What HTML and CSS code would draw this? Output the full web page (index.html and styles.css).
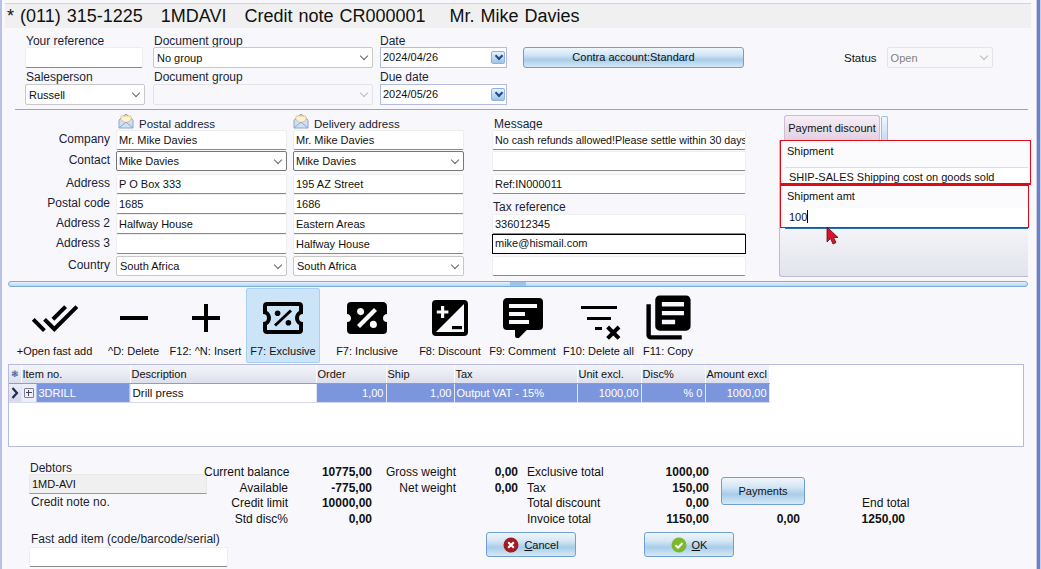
FILE: index.html
```html
<!DOCTYPE html>
<html lang="en">
<head>
    <meta charset="UTF-8">
    <meta name="viewport" content="width=device-width, initial-scale=1.0">
    <title>Credit note CR000001</title>
    <link rel="stylesheet" href="styles.css">
</head>
<body>
<div class="window">
    <h1 class="title">* (011) 315-1225 &nbsp; 1MDAVI &nbsp; Credit note CR000001 &nbsp; &nbsp;Mr. Mike Davies</h1>

    <!-- Top fields -->
    <section class="head-form">
        <label class="lbl c1 r1">Your reference</label>
        <label class="lbl c2 r1">Document group</label>
        <label class="lbl c3 r1">Date</label>
        <div class="edit c1 r2"></div>
        <div class="combo c2 r2">No group<span class="chev"></span></div>
        <div class="date c3 r2">2024/04/26<span class="date-btn"></span></div>
        <button class="btn contra">Contra account:Standard</button>
        <div class="status">
            <span>Status</span>
            <div class="combo disabled">Open<span class="chev"></span></div>
        </div>
        <label class="lbl c1 r3">Salesperson</label>
        <label class="lbl c2 r3">Document group</label>
        <label class="lbl c3 r3">Due date</label>
        <div class="combo c1 r4">Russell<span class="chev"></span></div>
        <div class="combo disabled c2 r4"><span class="chev"></span></div>
        <div class="date c3 r4">2024/05/26<span class="date-btn"></span></div>
    </section>

    <hr class="rule">

    <!-- Address fields -->
    <section class="addr-form">
        <div class="addr-head postal">
            <svg class="envelope" viewBox="0 0 16 16"><path d="M1 7L8 1l7 6v8H1z" fill="#cfe0f4" stroke="#8fa6c8"/><path d="M3 7V3h10v4L8 10z" fill="#fdf3d0" stroke="#d8b060" stroke-width=".6"/><path d="M1 15l7-6 7 6" fill="none" stroke="#8fa6c8"/></svg>
            <span>Postal address</span>
        </div>
        <div class="addr-head delivery">
            <svg class="envelope" viewBox="0 0 16 16"><path d="M1 7L8 1l7 6v8H1z" fill="#cfe0f4" stroke="#8fa6c8"/><path d="M3 7V3h10v4L8 10z" fill="#fdf3d0" stroke="#d8b060" stroke-width=".6"/><path d="M1 15l7-6 7 6" fill="none" stroke="#8fa6c8"/></svg>
            <span>Delivery address</span>
        </div>
        <div class="addr-head message"><span>Message</span></div>

        <span class="side">Company</span>
        <div class="edit">Mr. Mike Davies</div>
        <div class="edit">Mr. Mike Davies</div>
        <div class="edit msg first-msg">No cash refunds allowed!Please settle within 30 days</div>

        <span class="side">Contact</span>
        <div class="combo dark">Mike Davies<span class="chev"></span></div>
        <div class="combo dark">Mike Davies<span class="chev"></span></div>
        <div class="edit msg"></div>

        <span class="side">Address</span>
        <div class="edit">P O Box 333</div>
        <div class="edit">195 AZ Street</div>
        <div class="edit msg">Ref:IN000011</div>

        <span class="side">Postal code</span>
        <div class="edit">1685</div>
        <div class="edit">1686</div>
        <label class="lbl msg tax-lbl">Tax reference</label>

        <span class="side">Address 2</span>
        <div class="edit">Halfway House</div>
        <div class="edit">Eastern Areas</div>
        <div class="edit msg">336012345</div>

        <span class="side">Address 3</span>
        <div class="edit"></div>
        <div class="edit">Halfway House</div>
        <div class="edit msg focus">mike@hismail.com</div>

        <span class="side">Country</span>
        <div class="combo">South Africa<span class="chev"></span></div>
        <div class="combo">South Africa<span class="chev"></span></div>
        <div class="edit msg"></div>

        <!-- Tab panel -->
        <div class="tabs">
            <div class="tab-row">
                <div class="tab">Payment discount</div>
                <div class="tab-more"></div>
            </div>
            <div class="tab-body">
                <div class="tab-lbl">Shipment</div>
                <div class="tab-field first">SHIP-SALES Shipping cost on goods sold</div>
                <div class="tab-lbl second">Shipment amt</div>
                <div class="tab-field amt">100<span class="caret"></span></div>
            </div>
            <div class="mark mark-a"></div>
            <div class="mark mark-b"></div>
            <svg class="pointer" viewBox="0 0 13 18"><path d="M1 0v15l3.500-3.500L7 17l3-1.400-2.500-5.100H12z" fill="#e0102a" stroke="#50101a" stroke-width=".8"/></svg>
        </div>
    </section>

    <div class="splitter"><span class="grip"></span></div>

    <!-- Toolbar -->
    <nav class="toolbar">
        <div class="tool t1">
            <svg viewBox="0 0 24 24"><path d="M18 7l-1.410-1.410-6.340 6.340 1.410 1.410L18 7zm4.240-1.410L11.660 16.170 7.480 12l-1.410 1.410L11.660 19l12-12-1.420-1.410zM.41 13.410L6 19l1.410-1.410L1.830 12 .41 13.410z"/></svg>
            <span>+Open fast add</span>
        </div>
        <div class="tool t2">
            <svg viewBox="0 0 24 24"><path d="M19 13H5v-2h14v2z"/></svg>
            <span>^D: Delete</span>
        </div>
        <div class="tool t3">
            <svg viewBox="0 0 24 24"><path d="M19 13h-6v6h-2v-6H5v-2h6V5h2v6h6v2z"/></svg>
            <span>F12: ^N: Insert</span>
        </div>
        <div class="tool t4 active">
            <svg viewBox="0 0 24 24"><path fill-rule="evenodd" d="M4 4a2 2 0 0 0-2 2v4a2 2 0 0 1 0 4v4a2 2 0 0 0 2 2h16a2 2 0 0 0 2-2v-4a2 2 0 0 1 0-4V6a2 2 0 0 0-2-2H4zm0 2h16v2.540a4 4 0 0 0 0 6.920V18H4v-2.540a4 4 0 0 0 0-6.920V6z"/><path d="M15.500 7.800l1 1-8 7.400-1-1z"/><circle cx="9.300" cy="9.600" r="1.400"/><circle cx="14.700" cy="14.400" r="1.400"/></svg>
            <span>F7: Exclusive</span>
        </div>
        <div class="tool t5">
            <svg viewBox="0 0 24 24"><path d="M4 4a2 2 0 0 0-2 2v4c1.110 0 2 .9 2 2a2 2 0 0 1-2 2v4a2 2 0 0 0 2 2h16a2 2 0 0 0 2-2v-4a2 2 0 0 1-2-2c0-1.110.9-2 2-2V6c0-1.110-.9-2-2-2H4zm11.500 3L17 8.500 8.500 17 7 15.500 15.500 7zM8.810 7.040c.98 0 1.770.79 1.770 1.770a1.770 1.770 0 0 1-1.770 1.770c-.98 0-1.770-.79-1.770-1.770a1.770 1.770 0 0 1 1.770-1.770zm6.380 6.380c.98 0 1.770.79 1.770 1.770a1.770 1.770 0 0 1-1.770 1.770c-.98 0-1.770-.79-1.770-1.770a1.770 1.770 0 0 1 1.770-1.770z"/></svg>
            <span>F7: Inclusive</span>
        </div>
        <div class="tool t6">
            <svg viewBox="0 0 24 24"><path fill-rule="evenodd" d="M5 3h14a2 2 0 0 1 2 2v14a2 2 0 0 1-2 2H5a2 2 0 0 1-2-2V5a2 2 0 0 1 2-2zm14 2L5 19h14V5zM7.500 6v2.200H5.400v1.600h2.100V12h1.600V9.800h2.100V8.200H9.100V6H7.500z"/><path d="M13 16h5v1.600h-5z"/></svg>
            <span>F8: Discount</span>
        </div>
        <div class="tool t7">
            <svg viewBox="0 0 24 24"><path d="M9 22a1 1 0 0 1-1-1v-3H4a2 2 0 0 1-2-2V4c0-1.110.9-2 2-2h16a2 2 0 0 1 2 2v12a2 2 0 0 1-2 2h-6.100l-3.700 3.710c-.2.190-.45.290-.7.290H9zM5 5v2h14V5H5zm0 4v2h8V9H5zm0 4v2h10v-2H5z"/></svg>
            <span>F9: Comment</span>
        </div>
        <div class="tool t8">
            <svg viewBox="0 0 24 24"><path d="M3 6h18v1.500H3zM6 11.500h12V13H6zM10 16.500h3.500V18H10z"/><path d="M16.300 16.500l5.700 5.700M22 16.500l-5.700 5.700" stroke="#000" stroke-width="2" fill="none"/></svg>
            <span>F10: Delete all</span>
        </div>
        <div class="tool t9">
            <svg viewBox="0 0 24 24"><path d="M4 6H2v14c0 1.100.9 2 2 2h14v-2H4V6zm16-4H8c-1.100 0-2 .9-2 2v12c0 1.100.9 2 2 2h12c1.100 0 2-.9 2-2V4c0-1.100-.9-2-2-2zm-1 9H9V9h10v2zm-4 4H9v-2h6v2zm4-8H9V5h10v2z"/></svg>
            <span>F11: Copy</span>
        </div>
    </nav>

    <!-- Lines grid -->
    <div class="lines">
        <table>
            <colgroup>
                <col class="w-star"><col class="w-item"><col class="w-desc"><col class="w-order"><col class="w-ship">
                <col class="w-tax"><col class="w-unit"><col class="w-disc"><col class="w-amt">
            </colgroup>
            <thead>
                <tr>
                    <th class="star">&#10051;</th>
                    <th>Item no.</th>
                    <th>Description</th>
                    <th>Order</th>
                    <th>Ship</th>
                    <th>Tax</th>
                    <th>Unit excl.</th>
                    <th>Disc%</th>
                    <th>Amount excl</th>
                </tr>
            </thead>
            <tbody>
                <tr>
                    <td class="row-mark"><svg viewBox="0 0 8 12"><path d="M1.500 1L6 6l-4.500 5" fill="none" stroke="#1c2a58" stroke-width="2.200"/></svg></td>
                    <td class="item"><span class="expand"></span><span class="item-code">3DRILL</span></td>
                    <td class="plain">Drill press</td>
                    <td class="num">1,00</td>
                    <td class="num">1,00</td>
                    <td>Output VAT - 15%</td>
                    <td class="num">1000,00</td>
                    <td class="num">% 0</td>
                    <td class="num">1000,00</td>
                </tr>
            </tbody>
        </table>
    </div>

    <!-- Totals -->
    <footer class="totals">
        <div class="debtor">
            <div class="lbl">Debtors</div>
            <div class="ro">1MD-AVI</div>
            <div class="lbl credit">Credit note no.</div>
            <div class="lbl fast">Fast add item (code/barcode/serial)</div>
            <div class="edit fast-input"></div>
        </div>
        <div class="sums">
            <div class="sum-grid">
                <span class="rt">Current balance</span><b>10775,00</b><span class="rt">Gross weight</span><b>0,00</b><span class="lf">Exclusive total</span><b>1000,00</b><span></span><span></span>
                <span class="rt">Available</span><b>-775,00</b><span class="rt">Net weight</span><b>0,00</b><span class="lf">Tax</span><b>150,00</b><span></span><span></span>
                <span class="rt">Credit limit</span><b>10000,00</b><span></span><span></span><span class="lf">Total discount</span><b>0,00</b><span></span><span class="end-lbl">End total</span>
                <span class="rt">Std disc%</span><b>0,00</b><span></span><span></span><span class="lf">Invoice total</span><b>1150,00</b><b>0,00</b><b>1250,00</b>
                <button class="btn payments">Payments</button>
            </div>
            <div class="actions">
                <button class="btn act cancel">
                    <svg viewBox="0 0 16 16"><circle cx="8" cy="8" r="7.500" fill="#a01c20"/><path d="M5.200 5.200l5.600 5.600M10.800 5.200l-5.600 5.600" stroke="#fff" stroke-width="2.200"/></svg>
                    <span><u>C</u>ancel</span>
                </button>
                <button class="btn act ok">
                    <svg viewBox="0 0 16 16"><circle cx="8" cy="8" r="7.500" fill="#7cb82c"/><path d="M4.500 8.200l2.500 2.500 4.500-4.700" fill="none" stroke="#fff" stroke-width="2"/></svg>
                    <span><u>O</u>K</span>
                </button>
            </div>
        </div>
    </footer>
</div>
</body>
</html>
```

FILE: styles.css
```css
/* Page */
* {
    box-sizing: border-box;
}

html, body {
    margin: 0;
    height: 569px;
    overflow: hidden;
}

body {
    width: 1041px;
    background-color: #6d80c0;
    border-right: 1px solid #c8cee8;
    color: #111;
    font-family: "Liberation Sans", Arial, sans-serif;
    font-size: 12px;
}

.window {
    width: 1037px;
    height: 569px;
    padding-top: 3px;
    background-color: #f8f8fc;
    border-left: 2px solid #b9c0e8;
    border-right: 1px solid #c8cee8;
}

/* Title */
.title {
    margin: 0 0 0 3px;
    width: 1026px;
    height: 25px;
    padding-left: 2px;
    border-top: 1px solid #d4d4d8;
    background-color: #f0f0f0;
    font-size: 18px;
    font-weight: normal;
    line-height: 24px;
    word-spacing: 1px;
    white-space: nowrap;
}

/* Shared fields */
.lbl {
    display: block;
    line-height: 15px;
    color: #1a1f33;
    white-space: nowrap;
}

.edit, .combo, .date {
    position: relative;
    height: 100%;
    padding: 0 2px;
    background-color: #fff;
    font-size: 11px;
    line-height: 19px;
    white-space: nowrap;
    overflow: hidden;
}

.edit {
    border: 1px solid #eeeeee;
    border-bottom: 1px solid #8a8a8a;
    border-radius: 2px;
}

.combo {
    padding-left: 3px;
    border: 1px solid #c8c8c8;
    border-radius: 2px;
    line-height: 20px;
}

.combo.dark {
    border-color: #777;
    padding-left: 2px;
}

.combo.disabled {
    background-color: #f8f8fa;
    border-color: #e4e4e8;
    color: #808080;
}

.chev {
    position: absolute;
    right: 5px;
    top: 5px;
    width: 6px;
    height: 6px;
    border-right: 1px solid #666;
    border-bottom: 1px solid #666;
    transform: rotate(45deg);
}

.disabled .chev {
    border-color: #bbb;
}

.date {
    border: 1px solid #b5bbdc;
    padding-left: 2px;
    line-height: 18px;
}

.date-btn {
    position: absolute;
    right: 1px;
    top: 3px;
    width: 14px;
    height: 13px;
    border: 1px solid #8fb2d8;
    border-radius: 2px;
    background: linear-gradient(#e8f2fb, #9cc4e8);
}

.date-btn::after {
    content: "";
    position: absolute;
    left: 4px;
    top: 1px;
    width: 4px;
    height: 4px;
    border-right: 2px solid #204a90;
    border-bottom: 2px solid #204a90;
    transform: rotate(45deg);
}

.btn {
    border: 1px solid #6f9fd0;
    border-radius: 3px;
    background: linear-gradient(#f0f6fb 0%, #d4e6f5 35%, #a8cde9 62%, #d6e8f6 100%);
    color: #111;
    font-family: inherit;
    font-size: 11px;
    padding: 0;
}

/* Top form */
.head-form {
    display: grid;
    grid-template-columns: 128px 227px 143px 321px 180px;
    grid-template-rows: 13px 21px 16px 21px;
    margin: 6px 0 0 23px;
}

.c1 { grid-column: 1; width: 118px; }
.c2 { grid-column: 2; width: 220px; }
.c3 { grid-column: 3; width: 127px; }
.r1 { grid-row: 1; }
.r2 { grid-row: 2; }
.r3 { grid-row: 3; padding-top: 2px; }
.r4 { grid-row: 4; }
.c1.lbl, .c2.lbl { padding-left: 1px; }
.combo.c1 { width: 120px; }

.contra {
    grid-column: 4;
    grid-row: 2;
    width: 221px;
    padding-bottom: 2px;
}

.status {
    grid-column: 5;
    grid-row: 2;
    display: flex;
    align-items: center;
    gap: 10px;
    font-size: 11.500px;
}

.status .combo {
    width: 106px;
}

.rule {
    margin: 4px 0 0 13px;
    width: 1013px;
    height: 1px;
    border: 0;
    background-color: #a4a4a8;
}

/* Address form */
.addr-form {
    display: grid;
    grid-template-columns: 114px 177px 198px 288px 250px;
    grid-template-rows: 18px 21px 23px 20px 20px 20px 22px 20px;
    margin-top: 2px;
}

.addr-form .edit, .addr-form .combo {
    width: 171px;
    height: 20px;
    line-height: 18px;
}

.addr-form .msg {
    width: 254px;
    margin-left: 1px;
}

.addr-form .first-msg {
    font-size: 10.700px;
}

.addr-form .focus {
    border: 1px solid #000;
    border-radius: 0;
    line-height: 17px;
}

.addr-head {
    display: flex;
    align-items: flex-end;
    gap: 5px;
    height: 18px;
    font-size: 11.500px;
    line-height: 13px;
    color: #1a1f33;
}

.addr-head span {
    position: relative;
    top: 1px;
}

.addr-head.postal {
    grid-column: 2;
    padding-left: 2px;
}

.addr-head.delivery {
    grid-column: 3;
}

.addr-head.message {
    grid-column: 4;
    padding-left: 3px;
    font-size: 12px;
}

.envelope {
    width: 16px;
    height: 16px;
    align-self: flex-start;
    margin-top: 1px;
}

.side {
    grid-column: 1;
    padding-right: 6px;
    text-align: right;
    line-height: 19px;
    color: #1a2238;
}

.tax-lbl {
    padding: 6px 0 0 1px;
}

/* Tab panel */
.tabs {
    grid-column: 5;
    grid-row: 1 / -1;
    position: relative;
    margin-top: 3px;
    height: 162px;
    font-size: 11px;
}

.tab-row {
    display: flex;
    margin-left: 5px;
    height: 25px;
    gap: 1px;
}

.tab {
    width: 96px;
    padding-top: 6px;
    text-align: center;
    border: 1px solid #cdbcd2;
    border-bottom: 0;
    border-radius: 3px 3px 0 0;
    background: linear-gradient(#f6eef6, #e2d0e2);
    white-space: nowrap;
}

.tab-more {
    width: 7px;
    margin-top: 1px;
    border: 1px solid #9cc0e4;
    border-bottom: 0;
    border-radius: 2px 2px 0 0;
    background: linear-gradient(#f0f6fc, #c4dcf4);
}

.tab-body {
    width: 249px;
    height: 137px;
    padding-top: 4px;
    border: 1px solid #b8bcd8;
    border-right: 0;
    border-radius: 0 0 0 3px;
    background: linear-gradient(#fbfbfd 50%, #e2e4ec);
}

.tab-lbl {
    height: 22px;
    padding-left: 7px;
    line-height: 13px;
}

.tab-lbl.second {
    height: 18px;
    margin-top: 5px;
}

.tab-field {
    margin-left: 5px;
    padding-left: 4px;
    background-color: #fff;
    white-space: nowrap;
    overflow: hidden;
}

.tab-field.first {
    height: 18px;
    border-top: 1px solid #ddd;
    line-height: 19px;
}

.tab-field.amt {
    height: 21px;
    border-bottom: 2px solid #2a6fb8;
    line-height: 19px;
}

.caret {
    display: inline-block;
    width: 1px;
    height: 13px;
    background-color: #000;
    vertical-align: -2px;
}

.mark {
    position: absolute;
    left: 1px;
    border: 1px solid #e00a14;
}

.mark-a {
    top: 25px;
    width: 251px;
    height: 45px;
    border-width: 1px 1px 2px;
}

.mark-b {
    top: 70px;
    width: 249px;
    height: 43px;
}

.pointer {
    position: absolute;
    left: 47px;
    top: 112px;
    width: 13px;
    height: 18px;
}

/* Splitter */
.splitter {
    position: relative;
    height: 6px;
    margin: 5px 0 0 6px;
    width: 1020px;
    border: 1px solid #7aaede;
    border-radius: 3px;
    background: linear-gradient(#e8f2fb, #b8d6f0);
}

.grip {
    position: absolute;
    left: 501px;
    top: 0;
    width: 16px;
    height: 4px;
    background-color: #9cc4ea;
}

/* Toolbar */
.toolbar {
    display: flex;
    height: 75px;
    margin-top: 1px;
    padding-left: 10px;
    font-size: 11px;
}

.tool {
    display: flex;
    flex-direction: column;
    align-items: center;
    justify-content: flex-end;
    padding-bottom: 4px;
    border: 1px solid transparent;
    border-radius: 2px;
    white-space: nowrap;
}

.tool svg {
    width: 48px;
    height: 48px;
    margin-bottom: 2px;
    fill: #000;
}

.tool.t9 svg {
    width: 53px;
    height: 53px;
    margin-bottom: 0;
}

.tool span {
    line-height: 14px;
}

.tool.active {
    background-color: #cce4f8;
    border-color: #a8d0f0;
}

.t1 { width: 85px; }
.t2 { width: 73px; }
.t3 { width: 71px; }
.t4 { width: 74px; margin-left: 5px; }
.t5 { width: 72px; margin-left: 11px; }
.t6 { width: 72px; margin-left: 11px; }
.t7 { width: 73px; }
.t8 { width: 79px; }
.t9 { width: 60px; }

/* Lines grid */
.lines {
    width: 1016px;
    height: 83px;
    margin: 1px 0 0 6px;
    border: 1px solid #b5bade;
    background-color: #fff;
    font-size: 11px;
}

.lines table {
    table-layout: fixed;
    width: 760px;
    border-collapse: collapse;
}

.w-star { width: 12px; }
.w-item { width: 109px; }
.w-desc { width: 186px; }
.w-order { width: 70px; }
.w-ship { width: 68px; }
.w-tax { width: 123px; }
.w-unit { width: 64px; }
.w-disc { width: 64px; }
.w-amt { width: 64px; }

.lines th {
    height: 18px;
    padding: 0 0 0 1px;
    border-right: 1px solid #fff;
    border-bottom: 1px solid #8f9bd0;
    background: linear-gradient(#f4f5fa, #dcdfec);
    font-weight: normal;
    text-align: left;
    white-space: nowrap;
    overflow: hidden;
}

.lines th.star {
    padding: 0;
    font-size: 9px;
    text-align: center;
    color: #4a60a8;
}

.lines td {
    height: 19px;
    padding: 0 2px;
    border-right: 1px solid #e4e6f4;
    border-bottom: 1px solid #d6d9ee;
    background-color: #7b96dd;
    color: #fff;
    white-space: nowrap;
}

.lines td.plain {
    background-color: #fff;
    color: #111;
    font-size: 11.500px;
}

.lines td.num {
    text-align: right;
}

.lines td.row-mark {
    padding: 0;
    background: linear-gradient(#eceef6, #d4d8e8);
    text-align: center;
}

.row-mark svg {
    width: 8px;
    height: 12px;
    display: block;
    margin: 0 auto;
}

.lines td.item {
    position: relative;
    padding: 0;
    background: linear-gradient(to right, #eeeef8 15px, #7b96dd 15px);
}

.expand {
    position: absolute;
    left: 2px;
    top: 4px;
    width: 10px;
    height: 10px;
    border: 1px solid #7a7f9c;
    border-radius: 1px;
    background:
        linear-gradient(#445, #445) center / 6px 1px no-repeat,
        linear-gradient(#445, #445) center / 1px 6px no-repeat,
        #f0f0f8;
}

.item-code {
    padding-left: 17px;
}

/* Totals */
.totals {
    display: flex;
    margin: 14px 0 0 27px;
}

.debtor {
    width: 175px;
    flex: none;
    padding-left: 1px;
}

.ro {
    width: 178px;
    height: 20px;
    margin: -2px 0 0 -1px;
    padding-left: 2px;
    background-color: #f0f0f0;
    border: 1px solid #e8e8e8;
    border-bottom: 1px solid #999;
    font-size: 11px;
    line-height: 18px;
}

.credit {
    margin: 1px 0 0 1px;
}

.fast {
    margin: 22px 0 0 1px;
}

.fast-input {
    width: 199px;
    height: 20px;
    margin: 0 0 0 -1px;
}

.sum-grid {
    position: relative;
    display: grid;
    grid-template-columns: 84px 84px 84px 62px 100px 91px 91px 105px;
    grid-auto-rows: 15.600px;
    padding-top: 4px;
    line-height: 15px;
}

.sum-grid b {
    text-align: right;
}

.rt {
    text-align: right;
    white-space: nowrap;
}

.lf {
    padding-left: 9px;
    white-space: nowrap;
}

.end-lbl {
    padding-left: 62px;
    white-space: nowrap;
}

.payments {
    position: absolute;
    left: 517px;
    top: 16px;
    width: 84px;
    height: 28px;
}

.actions {
    display: flex;
    gap: 68px;
    margin: 5px 0 0 282px;
}

.act {
    display: flex;
    align-items: center;
    justify-content: center;
    gap: 5px;
    width: 90px;
    height: 25px;
}

.act svg {
    width: 16px;
    height: 16px;
}
```
